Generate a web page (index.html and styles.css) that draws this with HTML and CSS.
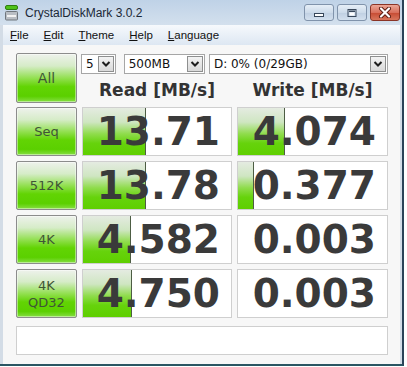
FILE: index.html
```html
<!doctype html>
<html lang="en">
<head>
	<meta charset="UTF-8">
	<title>CrystalDiskMark 3.0.2</title>
	<link rel="stylesheet" href="styles.css">
</head>
<body>
	<div class="window">
		<div class="titlebar">
			<span class="app-icon">
				<svg width="13" height="16" viewBox="0 0 13 16">
					<rect x="0.5" y="0.5" width="12" height="4" rx="1.5" fill="#4fc21a" stroke="#2f7d10"/>
					<rect x="0.5" y="6.5" width="12" height="8.5" rx="1" fill="#b9bec4" stroke="#6f767d"/>
					<rect x="2" y="10" width="9" height="2" fill="#f2f2f2"/>
				</svg>
			</span>
			<span class="title">CrystalDiskMark 3.0.2</span>
			<div class="caption-btns">
				<span class="cap-btn">
					<svg width="12" height="10" viewBox="0 0 12 10"><rect x="1.5" y="5.5" width="9" height="3" fill="#fff" stroke="#38475a"/></svg>
				</span>
				<span class="cap-btn">
					<svg width="12" height="10" viewBox="0 0 12 10"><rect x="2" y="1.5" width="8" height="7" fill="none" stroke="#38475a" stroke-width="1"/><rect x="3" y="2.5" width="6" height="1.5" fill="#38475a"/><rect x="3.5" y="4.5" width="5" height="3" fill="#fff"/></svg>
				</span>
				<span class="cap-btn close">
					<svg width="14" height="11" viewBox="0 0 14 11"><path d="M3 1.5 L11 9.5 M11 1.5 L3 9.5" stroke="#5a1a10" stroke-width="4" stroke-linecap="round"/><path d="M3 1.5 L11 9.5 M11 1.5 L3 9.5" stroke="#fff" stroke-width="2.2" stroke-linecap="round"/></svg>
				</span>
			</div>
		</div>
		<div class="menubar">
			<span><u>F</u>ile</span>
			<span><u>E</u>dit</span>
			<span><u>T</u>heme</span>
			<span><u>H</u>elp</span>
			<span><u>L</u>anguage</span>
		</div>
		<div class="client">
			<div class="top">
				<div class="btn all">All</div>
				<div class="controls">
					<div class="combos">
						<div class="combo c-count"><span>5</span><i class="arrow"><svg width="14" height="14" viewBox="0 0 14 14"><polyline points="3.5,5 7,8.5 10.5,5" fill="none" stroke="#1e1e1e" stroke-width="2"/></svg></i></div>
						<div class="combo c-size"><span>500MB</span><i class="arrow"><svg width="14" height="14" viewBox="0 0 14 14"><polyline points="3.5,5 7,8.5 10.5,5" fill="none" stroke="#1e1e1e" stroke-width="2"/></svg></i></div>
						<div class="combo c-drive"><span>D: 0% (0/29GB)</span><i class="arrow"><svg width="14" height="14" viewBox="0 0 14 14"><polyline points="3.5,5 7,8.5 10.5,5" fill="none" stroke="#1e1e1e" stroke-width="2"/></svg></i></div>
					</div>
					<div class="heads">
						<div>Read [MB/s]</div>
						<div>Write [MB/s]</div>
					</div>
				</div>
			</div>

			<div class="results">
				<div class="btn">Seq</div>
				<div class="cell"><span class="bar" style="width: 63px"></span><span class="num">13.71</span></div>
				<div class="cell"><span class="bar" style="width: 47px"></span><span class="num">4.074</span></div>

				<div class="btn">512K</div>
				<div class="cell"><span class="bar" style="width: 63px"></span><span class="num">13.78</span></div>
				<div class="cell"><span class="bar" style="width: 16px"></span><span class="num">0.377</span></div>

				<div class="btn">4K</div>
				<div class="cell"><span class="bar" style="width: 48px"></span><span class="num">4.582</span></div>
				<div class="cell"><span class="num">0.003</span></div>

				<div class="btn two">4K<br>QD32</div>
				<div class="cell"><span class="bar" style="width: 49px"></span><span class="num">4.750</span></div>
				<div class="cell"><span class="num">0.003</span></div>
			</div>

			<div class="status"></div>
		</div>
	</div>
</body>
</html>
```

FILE: styles.css
```css
body{
	margin: 0;
	background: #fff;
	font-family: "DejaVu Sans", sans-serif;
}
.window{
	width: 402px;
	height: 364px;
	border-right: 2px solid #2b4358;
	border-bottom: 2px solid #2a5663;
	background: #d3dce6;
	display: flex;
	flex-direction: column;
}

/* title bar */
.titlebar{
	height: 25px;
	display: flex;
	align-items: center;
	padding: 0 2px 0 5px;
	background: linear-gradient(#bfd2e7, #d3e0ed);
}
.app-icon{
	display: flex;
	margin-right: 7px;
}
.title{
	font-family: "Liberation Sans", Arial, sans-serif;
	font-size: 12px;
	color: #1b2836;
}
.caption-btns{
	margin-left: auto;
	align-self: flex-start;
	margin-top: 4px;
	display: flex;
	gap: 3px;
}
.cap-btn{
	width: 28px;
	height: 15px;
	border: 1px solid #8093ab;
	border-radius: 3px;
	background: linear-gradient(#e6eef7, #cddbea 50%, #bfcfe2 51%, #d3e0ee);
	display: flex;
	align-items: center;
	justify-content: center;
}
.cap-btn.close{
	border-color: #8a3426;
	background: linear-gradient(#eba696, #d9705c 50%, #c64a32 51%, #d8765c);
}

/* menu */
.menubar{
	height: 20px;
	margin: 0 2px 0 3px;
	padding-left: 7px;
	display: flex;
	align-items: center;
	gap: 15px;
	background: linear-gradient(#f6f9fc, #dde7f2);
	font-family: "Liberation Sans", Arial, sans-serif;
	font-size: 11.5px;
	color: #111;
}

/* client area */
.client{
	flex: 1;
	margin: 0 2px 0 3px;
	padding: 8px 0 0 13px;
	background: #f7f7f7;
}
.top{
	display: grid;
	grid-template-columns: 61px 306px;
	column-gap: 5px;
	height: 50px;
}
.btn{
	border: 1px solid #8c8c8c;
	border-radius: 2px;
	box-shadow: inset 0 0 0 1px rgba(255,255,255,0.45);
	background: linear-gradient(#eef2ec 0%, #d6ecc8 25%, #93e052 50%, #62d404 68%, #5bd000 88%, #86de44 100%);
	color: #3f5536;
	font-size: 13px;
	display: flex;
	align-items: center;
	justify-content: center;
	text-align: center;
	line-height: 17px;
}
.btn.all{
	font-size: 14px;
}
.controls{
	display: flex;
	flex-direction: column;
}
.combos{
	display: flex;
	margin-top: 1px;
	margin-left: -1px;
}
.combo{
	height: 18px;
	border: 1px solid #a6a6a6;
	background: #fff;
	display: flex;
	align-items: center;
	justify-content: space-between;
	padding: 0 1px 0 4px;
	font-size: 12px;
	color: #111;
}
.c-count{
	width: 28px;
}
.c-size{
	width: 75px;
	margin-left: 8px;
}
.c-drive{
	width: 174px;
	margin-left: 4px;
}
.arrow{
	width: 14px;
	height: 14px;
	border: 1px solid #8e8f8f;
	background: linear-gradient(#f3f3f3, #d9d9d9);
	display: flex;
}
.heads{
	flex: 1;
	display: grid;
	grid-template-columns: 150px 151px;
	column-gap: 5px;
	align-items: end;
	padding-bottom: 3px;
	font-size: 17px;
	font-weight: bold;
	color: #333;
	text-align: center;
}

/* results */
.results{
	margin-top: 4px;
	display: grid;
	grid-template-columns: 61px 150px 151px;
	grid-auto-rows: 49px;
	gap: 5px;
}
.cell{
	border: 1px solid #cfcfcf;
	background: #fff;
	display: grid;
	align-items: center;
}
.bar{
	grid-area: 1 / 1;
	align-self: stretch;
	justify-self: start;
	box-sizing: border-box;
	border-right: 1px solid #4d5d44;
	background: linear-gradient(#e4ebe1 0%, #cfe6c2 30%, #8fdc4c 55%, #66d30c 75%, #5fcf00 100%);
}
.num{
	grid-area: 1 / 1;
	justify-self: end;
	padding-right: 11px;
	font-size: 39px;
	font-weight: bold;
	line-height: 1;
	color: #3a3a3a;
}
.status{
	margin-top: 8px;
	width: 370px;
	height: 27px;
	border: 1px solid #cfcfcf;
	background: #fff;
}
```
